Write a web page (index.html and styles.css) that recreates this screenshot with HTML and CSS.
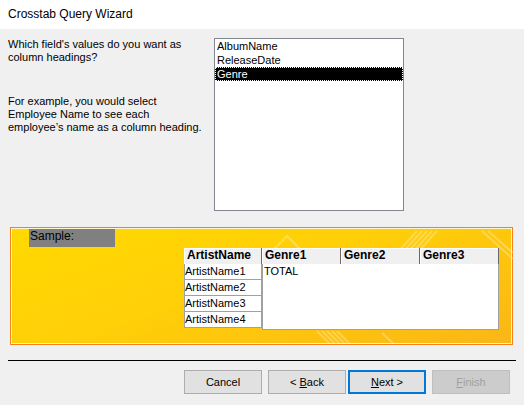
FILE: index.html
```html
<!DOCTYPE html>
<html>
<head>
<meta charset="utf-8">
<link rel="stylesheet" href="styles.css">
</head>
<body>
<div class="titlebar">Crosstab Query Wizard</div>
<div class="main">
  <div class="top">
    <div class="intro">
      <p class="q">Which field's values do you want as<br>column headings?</p>
      <p class="ex">For example, you would select<br>Employee Name to see each<br>employee’s name as a column heading.</p>
    </div>
    <div class="listbox">
      <div class="item">AlbumName</div>
      <div class="item">ReleaseDate</div>
      <div class="item sel">Genre</div>
    </div>
  </div>
  <div class="sample">
    <svg class="deco" width="501" height="115" viewBox="0 0 501 115">
      <g fill="none" stroke="#fff" stroke-opacity="0.28" stroke-width="2">
        <polyline points="262,20 275,7 288,20"/>
        <line x1="385" y1="24" x2="405" y2="2"/>
        <line x1="390" y1="24" x2="410" y2="2"/>
        <line x1="395" y1="24" x2="415" y2="2"/>
        <line x1="400" y1="24" x2="420" y2="2"/>
        <line x1="405" y1="24" x2="425" y2="2"/>
        <line x1="470" y1="2" x2="501" y2="30"/>
        <line x1="476" y1="2" x2="501" y2="24"/>
        <line x1="305" y1="102" x2="318" y2="115"/>
        <line x1="310" y1="102" x2="323" y2="115"/>
        <line x1="315" y1="102" x2="328" y2="115"/>
        <line x1="320" y1="102" x2="333" y2="115"/>
        <line x1="325" y1="102" x2="338" y2="115"/>
        <line x1="370" y1="104" x2="382" y2="115"/>
      </g>
    </svg>
    <div class="sample-label">Sample:</div>
    <div class="grid">
      <div class="rowcol">
        <div class="hdr">ArtistName</div>
        <div class="cell">ArtistName1</div>
        <div class="cell">ArtistName2</div>
        <div class="cell">ArtistName3</div>
        <div class="cell">ArtistName4</div>
      </div>
      <div class="genres">
        <div class="hdrs">
          <div class="hdr g">Genre1</div>
          <div class="hdr g">Genre2</div>
          <div class="hdr g">Genre3</div>
        </div>
        <div class="data">TOTAL</div>
      </div>
    </div>
  </div>
  <div class="sep"></div>
  <div class="buttons">
    <button class="btn">Cancel</button>
    <button class="btn back">&lt; <u>B</u>ack</button>
    <button class="btn next"><u>N</u>ext &gt;</button>
    <button class="btn dis"><u>F</u>inish</button>
  </div>
</div>
</body>
</html>
```
FILE: styles.css
```css
* { box-sizing: border-box; }
html, body { margin: 0; padding: 0; }
body {
  width: 524px;
  height: 405px;
  overflow: hidden;
  font-family: "Liberation Sans", Arial, sans-serif;
  font-size: 11px;
  color: #000;
  background: #f0f0f0;
}
.titlebar {
  height: 29px;
  background: #fff;
  font-size: 12px;
  line-height: 29px;
  padding-left: 8px;
}
.main { height: 376px; }
.top {
  display: flex;
  padding: 9px 0 0 8px;
}
.intro { width: 206px; }
.intro p { margin: 0; line-height: 13px; }
.intro .ex { margin-top: 31px; }
.listbox {
  width: 190px;
  height: 173px;
  background: #fff;
  border: 1px solid #828790;
}
.item {
  height: 14px;
  line-height: 14px;
  padding-left: 2px;
}
.item.sel {
  background: #000;
  color: #fff;
  outline: 1px dotted #fff;
  outline-offset: -1px;
  padding-left: 2px;
}
.sample {
  position: relative;
  margin: 16px 0 0 10px;
  width: 503px;
  height: 118px;
  border: 1px solid #f5821f;
  box-shadow: inset 0 0 0 1px #fff6cf;
  background: linear-gradient(160deg, #ffd900 0%, #ffcf08 45%, #fbb616 100%);
  padding: 1px;
}
.deco { position: absolute; left: 1px; top: 1px; }
.sample-label {
  position: relative;
  margin-left: 17px;
  width: 86px;
  height: 18px;
  background: #808080;
  font-size: 12px;
  line-height: 15px;
  padding-left: 1px;
}
.grid {
  position: relative;
  display: flex;
  margin: 1px 0 0 172px;
}
.rowcol { width: 78px; display: flex; flex-direction: column; }
.hdr {
  height: 16px;
  background: #f0f0f0;
  font-weight: bold;
  font-size: 12px;
  line-height: 15px;
  padding-left: 3px;
  border-right: 1px solid #696969;
  box-shadow: inset 1px 1px 0 #fff;
}
.cell {
  height: 16px;
  background: #fff;
  border: 1px solid #a0a0a0;
  border-top: none;
  line-height: 14px;
  padding-left: 0;
}
.cell:nth-child(4) { height: 16px; }
.genres { width: 237px; display: flex; flex-direction: column; }
.hdrs { display: flex; }
.hdr.g { width: 79px; }
.data {
  height: 66px;
  background: #fff;
  border: 1px solid #a0a0a0;
  border-top: none;
  line-height: 14px;
  padding-left: 1px;
}
.sep {
  margin: 15px 0 0 8px;
  width: 508px;
  height: 1px;
  background: #000;
}
.buttons {
  display: flex;
  justify-content: flex-end;
  margin-top: 9px;
  padding-right: 14px;
}
.btn {
  width: 78px;
  height: 24px;
  margin-left: 6px;
  background: #e1e1e1;
  border: 1px solid #adadad;
  font-family: "Liberation Sans", Arial, sans-serif;
  font-size: 11px;
  color: #000;
  padding: 0;
}
.btn.next { margin-left: 2px; border: 2px solid #0078d7; }
.btn.dis { background: #cccccc; border-color: #bfbfbf; color: #a0a0a0; }
```
